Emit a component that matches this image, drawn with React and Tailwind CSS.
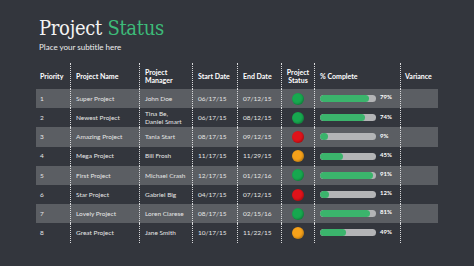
import React from "react";

const rows = [
  { id: 1, name: "Super Project", manager: ["John Doe"], start: "06/17/15", end: "07/12/15", status: "green", pct: 79, fill: 49 },
  { id: 2, name: "Newest Project", manager: ["Tina Be,", "Daniel Smart"], start: "06/17/15", end: "08/12/15", status: "green", pct: 74, fill: 45 },
  { id: 3, name: "Amazing Project", manager: ["Tania Start"], start: "08/17/15", end: "09/12/15", status: "red", pct: 9, fill: 8 },
  { id: 4, name: "Mega Project", manager: ["Bill Frosh"], start: "11/17/15", end: "11/29/15", status: "orange", pct: 45, fill: 23 },
  { id: 5, name: "First Project", manager: ["Michael Crash"], start: "12/17/15", end: "01/12/16", status: "green", pct: 91, fill: 53 },
  { id: 6, name: "Star Project", manager: ["Gabriel Big"], start: "04/17/15", end: "07/12/15", status: "red", pct: 12, fill: 9 },
  { id: 7, name: "Lovely Project", manager: ["Loren Clarese"], start: "08/17/15", end: "02/15/16", status: "green", pct: 81, fill: 50 },
  { id: 8, name: "Great Project", manager: ["Jane Smith"], start: "10/17/15", end: "11/22/15", status: "orange", pct: 49, fill: 26 },
];

const dotColor = {
  green: "bg-[#17a84f]",
  red: "bg-[#e0121a]",
  orange: "bg-[#f7a21a]",
};

const grid = "grid grid-cols-[34px_69px_53px_45px_44px_33px_86px_38px]";
const sep = "border-l border-dotted border-[#d8d9db]";

const App = () => {
  return (
    <div
      className="w-[474px] h-[266px] bg-[#33363d] pl-[36px] overflow-hidden"
      style={{ fontFamily: "Lato, 'Open Sans', sans-serif" }}
    >
      <div className="pl-[3px] pt-[16px]">
        <h1
          className="text-[20px] leading-[25px] text-[#f3f3f3] tracking-[-0.3px]"
          style={{ fontFamily: "'DejaVu Serif Condensed', 'DejaVu Serif', serif", fontStretch: "condensed" }}
        >
          Project <span className="text-[#3dbb79]">Status</span>
        </h1>
        <p className="text-[8px] leading-[10px] text-[#eeeeee] mt-[1px]">Place your subtitle here</p>
      </div>

      <div className="mt-[11px] w-[402px]">
        <div className={`${grid} h-[26px] text-[7px] font-bold text-white leading-[8px]`}>
          <div className="flex items-center pl-[4px]">Priority</div>
          <div className={`${sep} flex items-center pl-[5px]`}>Project Name</div>
          <div className={`${sep} flex items-center pl-[5px]`}>Project<br />Manager</div>
          <div className={`${sep} flex items-center pl-[5px]`}>Start Date</div>
          <div className={`${sep} flex items-center pl-[5px]`}>End Date</div>
          <div className={`${sep} flex items-center justify-center text-center`}>Project<br />Status</div>
          <div className={`${sep} flex items-center pl-[5px]`}>% Complete</div>
          <div className={`${sep} flex items-center pl-[4px]`}>Variance</div>
        </div>

        {rows.map((r) => (
          <div
            key={r.id}
            className={`${grid} h-[19.2px] text-[6.5px] text-[#e6e6e6] leading-[7.5px] ${r.id % 2 ? "bg-[#5b5e63]" : ""}`}
          >
            <div className="flex items-center pl-[4px]">{r.id}</div>
            <div className={`${sep} flex items-center pl-[5px]`}>{r.name}</div>
            <div className={`${sep} flex flex-col justify-center pl-[5px]`}>
              {r.manager.map((m) => (
                <span key={m}>{m}</span>
              ))}
            </div>
            <div className={`${sep} flex items-center pl-[5px]`}>{r.start}</div>
            <div className={`${sep} flex items-center pl-[5px]`}>{r.end}</div>
            <div className={`${sep} flex items-center justify-center`}>
              <span className={`block w-[12px] h-[12px] rounded-full shadow-[inset_-1px_-1px_2px_rgba(0,0,0,0.25)] ${dotColor[r.status]}`} />
            </div>
            <div className={`${sep} flex items-center pl-[5px] gap-[4px]`}>
              <div className="w-[56px] h-[7px] rounded-full bg-[#b3b4b6] overflow-hidden">
                <div className="h-full rounded-full bg-[#3bb46c]" style={{ width: r.fill }} />
              </div>
              <span className="font-bold text-white text-[6px] -mt-[3px]">{r.pct}%</span>
            </div>
            <div className={sep} />
          </div>
        ))}
      </div>
    </div>
  );
};

export default App;
